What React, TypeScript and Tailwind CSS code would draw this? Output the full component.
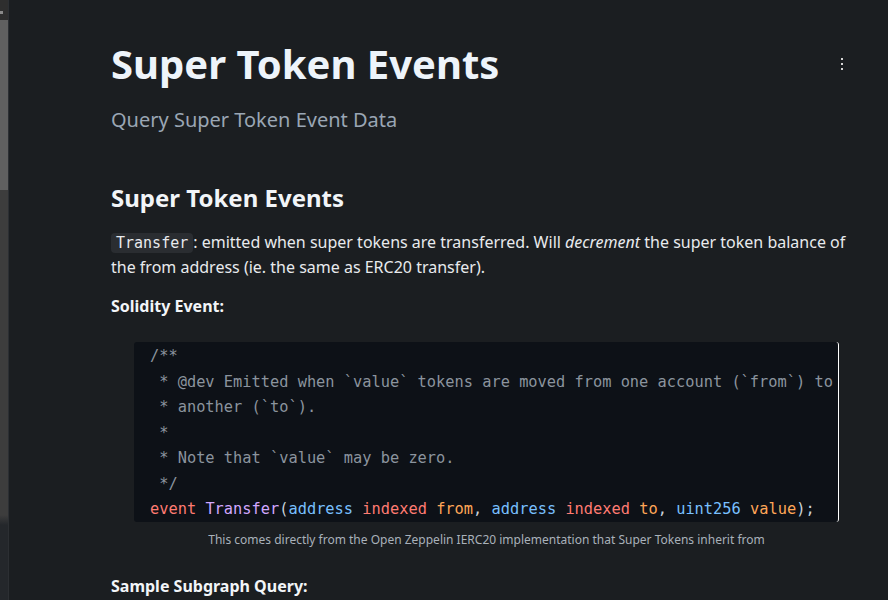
import React from "react";

const mono = { fontFamily: '"DejaVu Sans Mono", monospace' };

export default function App() {
  return (
    <div className="flex min-h-[600px] h-[600px] overflow-hidden bg-[#1b1e21] text-[#e6e9ec]" style={{ fontFamily: '"Noto Sans", sans-serif' }}>
      {/* Left scroll strip */}
      <div className="flex w-[9px] shrink-0 flex-col border-r border-[#2c2f33] bg-[#24272b]">
        <div className="relative h-[20px] bg-[#2e2e2e]">
          <div className="absolute left-0 top-[11px] h-[3px] w-[3px] bg-[#8a8a8a]" />
        </div>
        <div className="h-[170px] bg-[#606060]" />
        <div className="h-[325px] bg-[#3d3d3d]" />
        <div className="h-[10px] bg-gradient-to-b from-[#3d3d3d] to-[#24272b]" />
      </div>

      {/* Main content */}
      <div className="relative flex-1 pl-[102px]">
        <button className="absolute right-[45px] top-[58px] flex flex-col gap-[3px]">
          <span className="h-[2px] w-[2px] bg-[#d4d4d4]" />
          <span className="h-[2px] w-[2px] bg-[#d4d4d4]" />
          <span className="h-[2px] w-[2px] bg-[#d4d4d4]" />
        </button>

        <h1 className="mt-[40px] text-[40px] font-bold leading-[48px] text-[#eef4fa]">Super Token Events</h1>
        <p className="mt-[18px] text-[20px] leading-[28px] text-[#9aa6b4]">Query Super Token Event Data</p>

        <h2 className="mt-[48px] text-[24px] font-bold leading-[32px] text-[#f2f5f8]">Super Token Events</h2>

        <p className="mt-[16px] w-[750px] text-[16px] leading-[25px] text-[#e8eaed]">
          <code className="rounded-[4px] bg-[#2a2d31] px-[5px] py-[1px] text-[15px] leading-none" style={mono}>Transfer</code>: emitted when super tokens are transferred. Will <em>decrement</em> the super token balance of the from address (ie. the same as ERC20 transfer).
        </p>

        <p className="mt-[14px] text-[16px] font-bold leading-[25px] text-[#f2f5f8]">Solidity Event:</p>

        <figure className="mt-[23px] ml-[23px] w-[705px]">
          <pre className="h-[180px] rounded-[3px] border-r border-white bg-[#0d1117] pl-[16px] pt-[2px] text-[15.33px] leading-[25.5px] text-[#c9d1d9]" style={mono}>
            <div className="text-[#8b949e]">/**</div>
            <div className="text-[#8b949e]"> * @dev Emitted when `value` tokens are moved from one account (`from`) to</div>
            <div className="text-[#8b949e]"> * another (`to`).</div>
            <div className="text-[#8b949e]"> *</div>
            <div className="text-[#8b949e]"> * Note that `value` may be zero.</div>
            <div className="text-[#8b949e]"> */</div>
            <div>
              <span className="text-[#ff7b72]">event</span> <span className="text-[#d2a8ff]">Transfer</span>(<span className="text-[#79c0ff]">address</span> <span className="text-[#ff7b72]">indexed</span> <span className="text-[#ffa657]">from</span>, <span className="text-[#79c0ff]">address</span> <span className="text-[#ff7b72]">indexed</span> <span className="text-[#ffa657]">to</span>, <span className="text-[#79c0ff]">uint256</span> <span className="text-[#ffa657]">value</span>);
            </div>
          </pre>
          <figcaption className="mt-[10px] text-center text-[12px] leading-[16px] text-[#a9b1ba]">
            This comes directly from the Open Zeppelin IERC20 implementation that Super Tokens inherit from
          </figcaption>
        </figure>

        <p className="mt-[26px] text-[16px] font-bold leading-[25px] text-[#f2f5f8]">Sample Subgraph Query:</p>
      </div>
    </div>
  );
}
